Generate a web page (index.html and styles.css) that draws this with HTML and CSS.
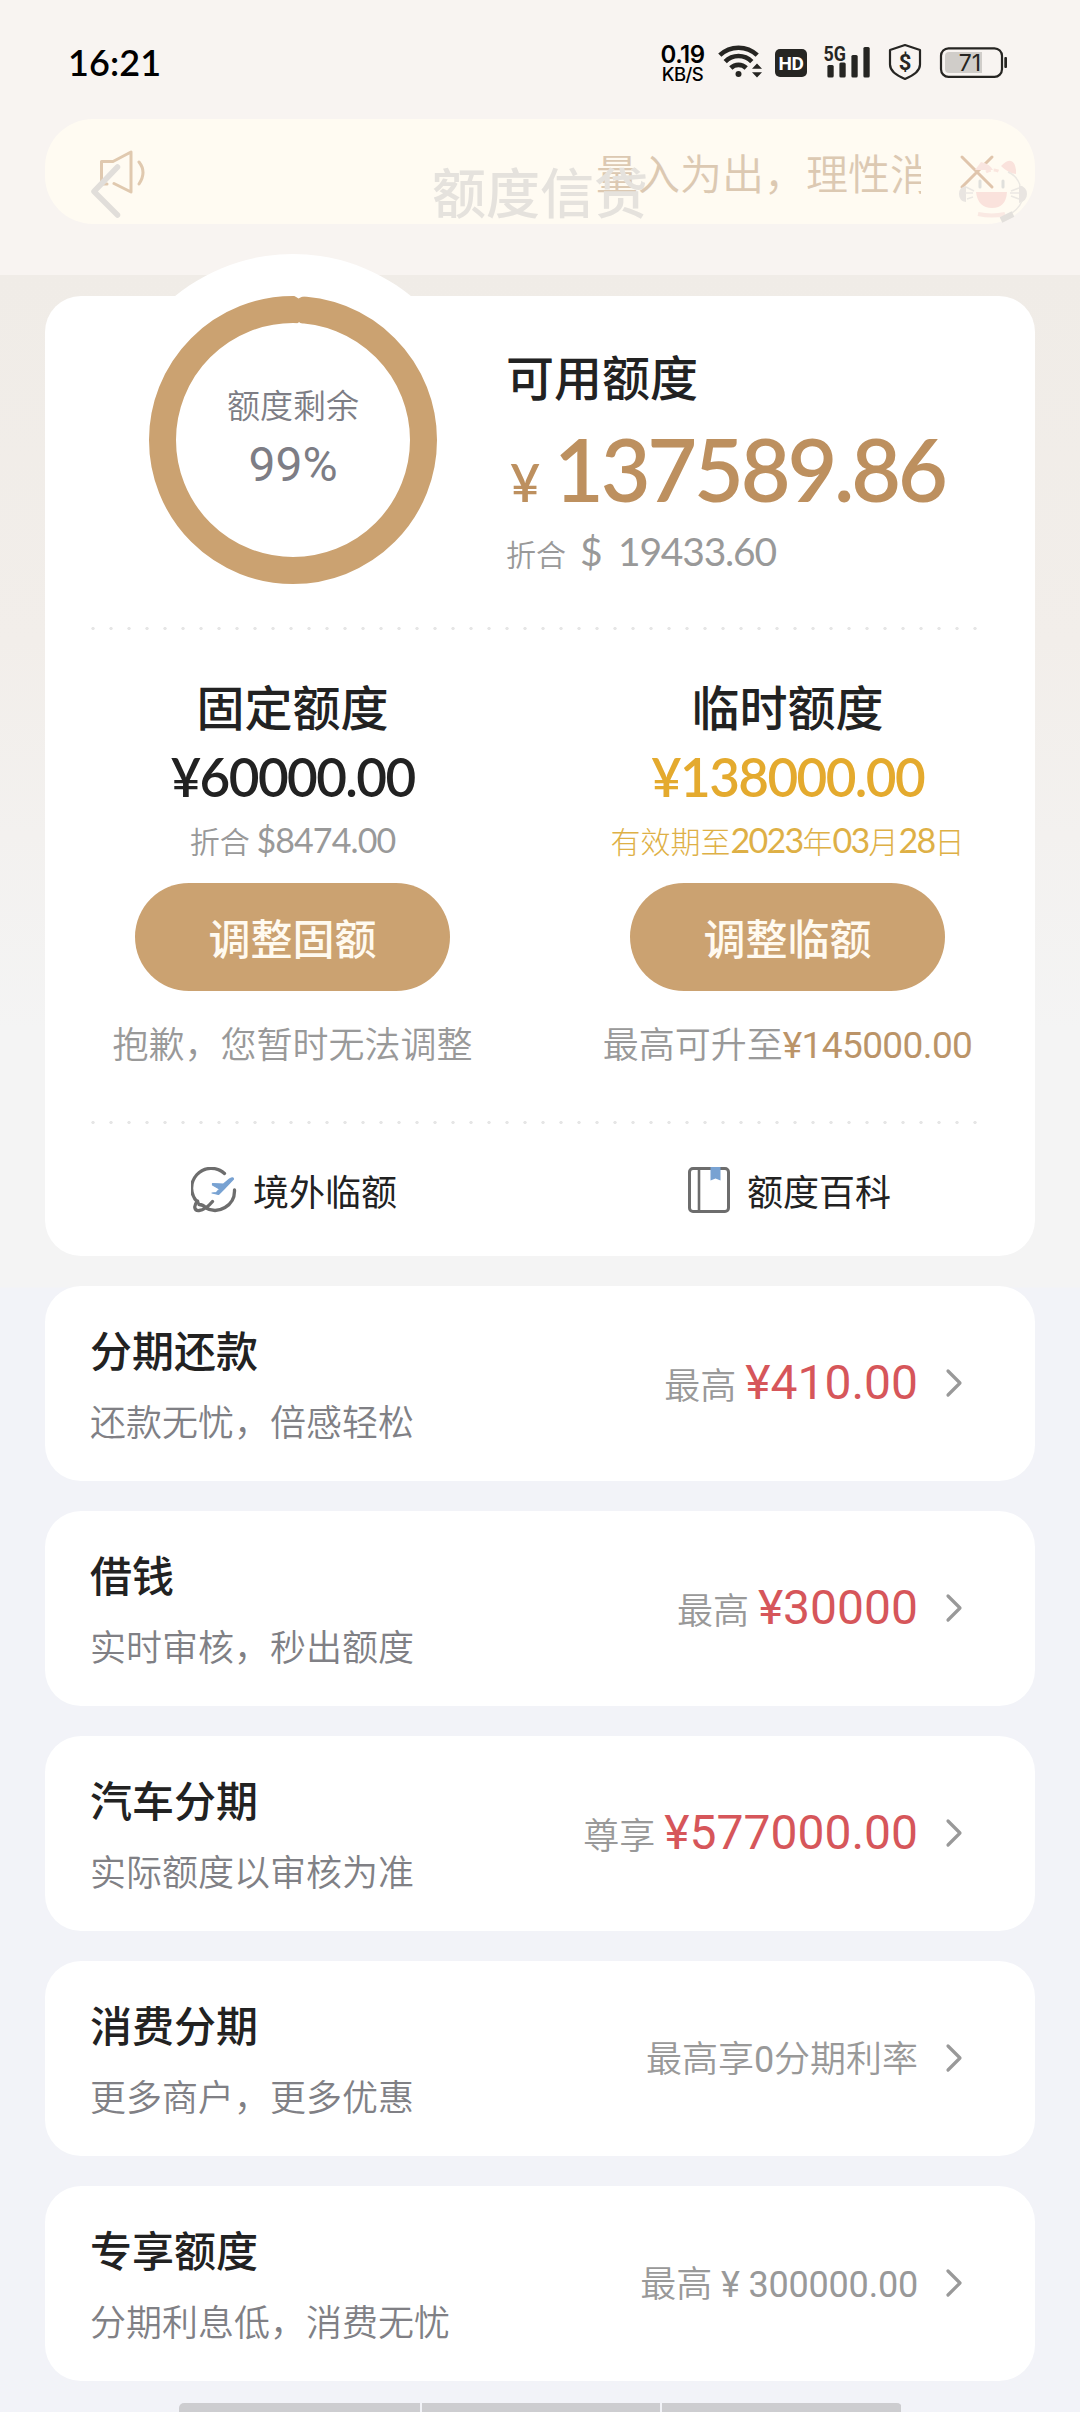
FILE: index.html
```html
<!DOCTYPE html>
<html lang="zh-CN">
<head>
<meta charset="utf-8">
<title>额度信贷</title>
<link rel="stylesheet" href="styles.css">
</head>
<body>
<div class="screen">
  <header class="header">
    <div class="status">
      <span class="clock">16:21</span>
      <div class="speed"><b>0.19</b><span>KB/S</span></div>
      <svg class="wifi" width="46" height="36" viewBox="0 0 46 36" fill="none" stroke="#262522" stroke-width="4.6">
        <path d="M1.8 12.2a27 27 0 0 1 37.4 0M7.2 18.6a18.6 18.6 0 0 1 26.600 0M12.800 25a11 11 0 0 1 15.400 0"/>
        <circle cx="20.5" cy="31" r="3" fill="#262522" stroke="none"/>
        <path d="M39 20.5l5 5.2H34zM39 34.5l5-5.2H34z" fill="#262522" stroke="none"/>
      </svg>
      <span class="hd">HD</span>
      <svg class="signal" width="48" height="36" viewBox="823 43 48 36" fill="#262522">
        <rect x="827.4" y="65" width="6.3" height="12.5" rx="1.5"/><rect x="839.4" y="62.500" width="6.3" height="15" rx="1.5"/>
        <rect x="851.4" y="55" width="6.3" height="22.5" rx="1.5"/><rect x="863.4" y="47" width="6.3" height="30.5" rx="1.5"/>
        <text x="823.6" y="60.5" class="net" textLength="22.4" lengthAdjust="spacingAndGlyphs">5G</text>
      </svg>
      <svg class="shield" width="36" height="38" viewBox="887 43 36 38">
        <path d="M905 45l15 5v14.500c0 6.500-6.500 11-15 14.500-8.500-3.500-15-8-15-14.500V50z" fill="none" stroke="#262522" stroke-width="2.2" stroke-linejoin="round"/>
        <text x="905" y="69.500" text-anchor="middle" class="dollar">$</text>
      </svg>
      <svg class="battery" width="70" height="34" viewBox="939 46 70 34">
        <rect x="941" y="48.300" width="61" height="28.500" rx="7.500" fill="none" stroke="#262522" stroke-width="2.200"/>
        <path d="M949 52h33v21h-33q-4 0-4-4V56q0-4 4-4z" fill="#d0cdc9"/>
        <rect x="1004.300" y="57" width="2.700" height="11" rx="1" fill="#262522"/>
        <text x="970" y="71" text-anchor="middle" class="level">71</text>
      </svg>
    </div>
    <div class="titlebar">
      <svg class="back" width="32" height="58" viewBox="0 0 32 58" fill="none" stroke="#e1deda" stroke-width="5.500" stroke-linecap="round" stroke-linejoin="round"><path d="M27.500 4L4 28.500 27.500 52"/></svg>
      <h1>额度信贷</h1>
      <svg class="mascot" width="70" height="64" viewBox="0 0 70 64">
        <path d="M17 10l6-8q9 2 12 8z" fill="#f9e5e0"/>
        <path d="M43 6q6-6 10-5t5 9v4q-8-1-15-8z" fill="#fae2dc"/>
        <path d="M28 12q7-4 14 0" fill="none" stroke="#fae6df" stroke-width="3" stroke-dasharray="5 3"/>
        <path d="M8 26v16q-7-1-7-8t7-8zM61 25v18q8-2 8-9t-8-9z" fill="#e9e5e1"/>
        <path d="M22 21v6M45 21v6" stroke="#e0e0dc" stroke-width="3" stroke-linecap="round"/>
        <path d="M8 27l8 4M7 33h8M9 39l6-2M61 28l-8 3M61 33h-9M61 39l-8-3M50 12q9 4 12 13M64 41q-4 10-16 15" fill="none" stroke="#ebe8e3" stroke-width="1.500"/>
        <path d="M18 32h31q-1 16-15 16T18 32z" fill="#fae2dc"/>
        <path d="M20 54q14 3 27 0" fill="none" stroke="#fae9e3" stroke-width="4"/>
        <path d="M43 60l12-6" stroke="#e3e0dc" stroke-width="6"/>
      </svg>
      <div class="notice">
        <svg class="horn" width="50" height="48" viewBox="0 0 50 48" fill="none" stroke="#e0c9af" stroke-width="3" stroke-linecap="round" stroke-linejoin="round">
          <path d="M10 36H4.500V13.500H16L34 4v40L17 35.500M42 14q8 10 0 22"/>
        </svg>
        <div class="ticker"><span>量入为出，理性消费</span></div>
        <svg class="close" width="36" height="36" viewBox="0 0 36 36" stroke="#e0c5ac" stroke-width="3" stroke-linecap="round"><path d="M3 3l30 30M33 3L3 33"/></svg>
      </div>
    </div>
  </header>

  <main class="content">
    <section class="quota">
      <div class="overview">
        <div class="gauge">
          <svg class="ring" width="372" height="372" viewBox="0 0 372 372">
            <circle cx="186" cy="186" r="186" fill="#fff"/>
            <circle cx="186" cy="186" r="130.500" fill="none" stroke="#cba271" stroke-width="27"/>
            <path d="M184 41l3.500 1 4 2.500 4-2 4-1zM187 71l3.500-1.500 1.500-1.500 2 1.500 4 1.500z" fill="#fff"/>
          </svg>
          <div class="gauge-text"><span>额度剩余</span><b>99%</b></div>
        </div>
        <div class="available">
          <h2>可用额度</h2>
          <p class="total"><small>¥</small><span>137589.86</span></p>
          <p class="usd"><span>折合</span><i>$</i><em>19433.60</em></p>
        </div>
      </div>
      <div class="dots"></div>
      <div class="columns">
        <div class="column">
          <h2>固定额度</h2>
          <p class="money">¥60000.00</p>
          <p class="hint">折合 <i>$8474.00</i></p>
          <button>调整固额</button>
          <p class="note">抱歉，您暂时无法调整</p>
        </div>
        <div class="column">
          <h2>临时额度</h2>
          <p class="money gold">¥138000.00</p>
          <p class="hint expiry">有效期至<i>2023</i>年<i>03</i>月<i>28</i>日</p>
          <button>调整临额</button>
          <p class="note">最高可升至<b>¥145000.00</b></p>
        </div>
      </div>
      <div class="dots"></div>
      <div class="links">
        <a><svg width="46" height="46" viewBox="0 0 46 46" fill="none" stroke="#6d6d6d" stroke-width="3.300" stroke-linecap="round">
          <path d="M33.500 6.500A19.500 19.500 0 0 0 7 35.500M43.500 23A19.500 19.500 0 0 1 14 40.500M6.500 34C2 39 3.500 44 8 43.500S17 40 21.500 34.500M8 37.500q4 0 7 3.500"/>
          <path d="M21.500 16.500l11 .5 6-5q4-2.500 4 0L33 22l-5.500 5.500-6.500-1.500 4.500-.5 3-3.500-7-4z" fill="#78a2d2" stroke="#78a2d2" stroke-width="1.200" stroke-linejoin="round"/></svg>境外临额</a>
        <a><svg width="44" height="48" viewBox="0 0 44 48" fill="none" stroke="#6d6d6d" stroke-width="3"><rect x="2.500" y="2.500" width="39" height="43" rx="3.500"/><path d="M12 3v42" stroke-width="2.600"/><path d="M23.500 1h10v13.500l-5-2-5 2z" fill="#78a2d2" stroke="none"/></svg>额度百科</a>
      </div>
    </section>

    <section class="item">
      <div class="desc"><h3>分期还款</h3><p>还款无忧，倍感轻松</p></div>
      <div class="offer"><span>最高</span><b>¥410.00</b></div>
      <svg class="chevron" width="18" height="30" viewBox="0 0 18 30"><path d="M3 3l12 12L3 27"/></svg>
    </section>
    <section class="item">
      <div class="desc"><h3>借钱</h3><p>实时审核，秒出额度</p></div>
      <div class="offer"><span>最高</span><b>¥30000</b></div>
      <svg class="chevron" width="18" height="30" viewBox="0 0 18 30"><path d="M3 3l12 12L3 27"/></svg>
    </section>
    <section class="item">
      <div class="desc"><h3>汽车分期</h3><p>实际额度以审核为准</p></div>
      <div class="offer"><span>尊享</span><b>¥577000.00</b></div>
      <svg class="chevron" width="18" height="30" viewBox="0 0 18 30"><path d="M3 3l12 12L3 27"/></svg>
    </section>
    <section class="item">
      <div class="desc"><h3>消费分期</h3><p>更多商户，更多优惠</p></div>
      <div class="offer"><span>最高享<i>0</i>分期利率</span></div>
      <svg class="chevron" width="18" height="30" viewBox="0 0 18 30"><path d="M3 3l12 12L3 27"/></svg>
    </section>
    <section class="item">
      <div class="desc"><h3>专享额度</h3><p>分期利息低，消费无忧</p></div>
      <div class="offer"><span>最高<i> ¥ 300000.00</i></span></div>
      <svg class="chevron" width="18" height="30" viewBox="0 0 18 30"><path d="M3 3l12 12L3 27"/></svg>
    </section>
  </main>
  <div class="navhint"><i></i><i></i><i></i></div>
</div>
</body>
</html>
```
FILE: styles.css
```css
* { box-sizing: border-box; margin: 0; padding: 0; }
body { background: #f2f3f8; }
i, em { font-style: normal; }
.screen {
  width: 1080px; height: 2412px; overflow: hidden;
  display: flex; flex-direction: column;
  font-family: "Noto Sans CJK SC", sans-serif; color: #222;
  background: linear-gradient(#f0ece7 275px, #f2eeea 640px, #f4f4f4 1030px, #f4f4f4 1287px, #f2f3f8 1288px);
}
.header { height: 275px; background: #f8f4f1; flex: none; }

.status { height: 119px; padding: 43px 0 0 68px; display: flex; align-items: flex-start; color: #000; }
.clock { width: 592px; font: 600 36px/38px Lato, sans-serif; letter-spacing: .1px; }
.speed { width: 45px; margin-right: 13px; display: flex; flex-direction: column; align-items: center; font-family: Inter, sans-serif; white-space: nowrap; }
.speed b { font-size: 24px; font-weight: 600; line-height: 24px; letter-spacing: -.6px; }
.speed span { font-size: 18.5px; font-weight: 500; line-height: 14px; letter-spacing: -.5px; }
.hd {
  width: 32px; height: 28px; margin: 6px 16px 0 11px; border-radius: 5px; background: #262522; color: #fff;
  font: 700 19px/29px Roboto, sans-serif; text-align: center; letter-spacing: -.4px;
}
.net { font: 700 21px Roboto, sans-serif; }
.shield { margin-left: 16px; }
.dollar { font: 700 22px Roboto, sans-serif; fill: #262522; }
.battery { margin: 3px 0 0 16px; }
.level { font: 400 23px Inter, sans-serif; fill: #262522; }

.titlebar { height: 156px; position: relative; }
.titlebar h1 {
  position: absolute; z-index: 2; left: 0; right: 0; top: 42px; text-align: center;
  font-size: 54px; font-weight: 500; line-height: 60px; color: #e5e2dd;
}
.back { position: absolute; z-index: 2; left: 90px; top: 44px; }
.mascot { position: absolute; z-index: 2; left: 958px; top: 41px; }
.notice {
  position: absolute; left: 45px; right: 45px; top: 0; height: 105px; border-radius: 48px;
  background: #fffbf2; display: flex; align-items: center; padding: 0 38px 0 52px;
}
.ticker { margin-left: 449px; width: 325px; overflow: hidden; white-space: nowrap; font-size: 42px; line-height: 60px; color: #dcc9b2; font-weight: 350; }
.close { margin-left: 38px; }

.content { padding: 21px 45px 0; display: flex; flex-direction: column; gap: 30px; }
.quota { height: 960px; border-radius: 36px; background: #fff; flex: none; }
.overview { height: 331px; display: flex; }
.gauge { width: 372px; height: 372px; margin: -42px 0 0 62px; display: grid; flex: none; }
.ring, .gauge-text { grid-area: 1 / 1; }
.gauge-text { display: flex; flex-direction: column; align-items: center; padding-top: 130px; color: #7d7d85; }
.gauge-text span { font-size: 33px; line-height: 40px; font-weight: 350; }
.gauge-text b { font: 400 48px/60px Roboto, sans-serif; margin-top: 11px; }
.available { padding: 51px 0 0 27px; }
h2 { font-size: 48px; font-weight: 500; line-height: 56px; white-space: nowrap; }
.total { display: flex; align-items: baseline; color: #bd905f; font: 600 86px/84px Lato, sans-serif; margin-top: 24px; white-space: nowrap; }
.total small { width: 48px; padding-left: 4px; font-size: 52px; }
.total span { letter-spacing: -3.2px; }
.usd { display: flex; align-items: baseline; color: #999; font: 400 39px/50px Lato, sans-serif; margin-top: 2px; }
.usd span { width: 74px; font: 350 30px/50px "Noto Sans CJK SC", sans-serif; }
.usd i { width: 38px; }
.usd em { letter-spacing: -1.2px; }

.dots { height: 3px; margin: 0 44px 0 39px; background: radial-gradient(circle, #e6e6e6 1.4px, transparent 1.9px) 0 0 / 18px 3px; }
.columns { height: 491px; display: grid; grid-template-columns: 1fr 1fr; }
.column { display: flex; flex-direction: column; align-items: center; padding-top: 47px; white-space: nowrap; }
.money { margin: 14px 0 0; font: 600 53px/60px Lato, sans-serif; letter-spacing: -1.6px; }
.gold { color: #e4aa2e; }
.hint { height: 40px; margin-top: 13px; color: #999; font-size: 30px; font-weight: 350; line-height: 40px; }
.hint i { font: 400 34px/40px Lato, sans-serif; letter-spacing: -.9px; }
.expiry { color: #deb046; font-weight: 300; }
.expiry i { letter-spacing: -1.7px; }
button { width: 315px; height: 108px; margin-top: 23px; border: 0; border-radius: 54px; background: #cba271; color: #fffaf0; font: 500 42px/60px "Noto Sans CJK SC", sans-serif; flex: none; }
.note { margin-top: 26px; color: #999; font-size: 36px; font-weight: 350; line-height: 50px; }
.note b { font: 400 37px/50px Roboto, sans-serif; letter-spacing: -.6px; color: #bb9468; }
.links { display: grid; grid-template-columns: 1fr 1fr; height: 132px; }
.links a { display: flex; align-items: center; justify-content: center; gap: 16px; padding-left: 3px; font-size: 36px; line-height: 50px; color: #222; }

.item { height: 195px; flex: none; border-radius: 36px; background: #fff; display: flex; align-items: center; padding: 0 72px 0 45px; }
.desc { flex: 1; }
.desc h3 { font-size: 42px; font-weight: 500; line-height: 60px; margin-top: -3px; }
.desc p { font-size: 36px; font-weight: 350; line-height: 50px; margin-top: 16px; color: #808085; }
.offer { display: flex; align-items: center; margin-top: -2px; font-size: 36px; line-height: 50px; color: #999; white-space: nowrap; }
.offer span { font-weight: 350; }
.offer b { font: 400 48px/50px Roboto, sans-serif; color: #d6565a; margin-left: 9px; }
.offer i { font: 400 36px/50px Roboto, sans-serif; letter-spacing: -.2px; white-space: pre; }
.chevron { margin: -1px 0 0 27px; fill: none; stroke: #999; stroke-width: 3.2; stroke-linecap: round; stroke-linejoin: round; }

.navhint { margin: 22px auto 0; width: 723px; height: 12px; display: grid; grid-template-columns: 242fr 238fr 240fr; gap: 2px; border-radius: 5px 5px 0 0; overflow: hidden; }
.navhint i { background: #cdcdd0; }
```
